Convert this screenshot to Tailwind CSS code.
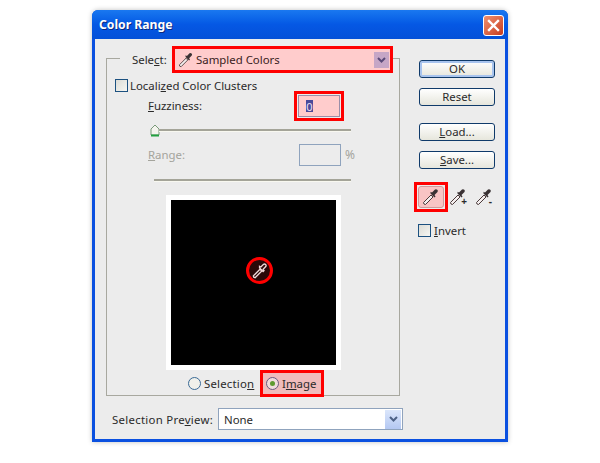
<!DOCTYPE html>
<html lang="en">
<head>
    <meta charset="UTF-8">
    <title>Color Range</title>
    <script src="https://cdn.jsdelivr.net/npm/@tailwindcss/browser@4"></script>
</head>
<body class="bg-white w-[600px] h-[463px] overflow-hidden font-['Noto_Sans',sans-serif] text-[11.4px] leading-none text-[#2a2a2a]">
    <svg class="hidden">
        <symbol id="dropper" viewBox="0 0 18 18">
            <path d="M2 16l-.5-1.500L9 7l2 2-7.500 7.500z" fill="#f4eeee" stroke="#4a3a3a" stroke-width="1"/>
            <path d="M8.500 5.500l4 4 1-1-1-1.500 3-3a1.800 1.800 0 0 0-2.500-2.500l-3 3-1.500-.8z" fill="#3a3234"/>
        </symbol>
    </svg>

    <!-- window -->
    <div class="ml-[92px] mt-[10px] w-[416px] h-[432px] flex flex-col rounded-t-[6px] bg-[#0a50e0] shadow-[0_0_5px_rgba(0,0,0,0.25)]">
        <!-- title bar -->
        <div class="h-[29px] shrink-0 flex items-center justify-between pl-[7px] pr-[4px] rounded-t-[6px] bg-gradient-to-b from-[#1a78f0] via-[#0558e4] to-[#0450d8]">
            <span class="text-white font-bold text-[12.200px] mt-[2px] [text-shadow:1px_1px_0_#0a2a80]">Color Range</span>
            <div class="w-[21px] h-[21px] mt-[1px] rounded-[3px] border border-white bg-gradient-to-br from-[#ee9070] to-[#c8391a] flex items-center justify-center">
                <svg width="13" height="13" viewBox="0 0 13 13"><path d="M2 2l9 9M11 2l-9 9" stroke="#fff" stroke-width="2.400" stroke-linecap="square"/></svg>
            </div>
        </div>

        <!-- client area -->
        <div class="flex-1 ml-[3px] mr-[3px] mb-[3px] bg-[#ececec] flex">
            <!-- left column -->
            <div class="w-[324px] pl-[11px] pt-[19px] flex flex-col">
                <div class="w-[294px] h-[338px] border border-[#a8a89f] flex flex-col">
                    <!-- select row -->
                    <div class="-mt-[13px] ml-[13px] mr-[6px] pl-[12px] bg-[#ececec] flex items-center">
                        <span class="w-[40px] pt-[1px]">Sele<u>c</u>t:</span>
                        <div class="w-[221px] h-[27px] border-[3px] border-[#ff0000] bg-[#ffcccc] flex items-center pl-[3px] pr-[1px]">
                            <svg width="16" height="16"><use href="#dropper"/></svg>
                            <span class="ml-[2px] pt-[1px] flex-1 text-[#3a2222]">Sampled Colors</span>
                            <div class="w-[15px] h-[16px] bg-[#c6a6c6] flex items-center justify-center">
                                <svg width="9" height="6" viewBox="0 0 9 6"><path d="M1 1l3.500 3.500L8 1" fill="none" stroke="#5a4a78" stroke-width="2"/></svg>
                            </div>
                        </div>
                    </div>
                    <!-- localized -->
                    <div class="mt-[6px] ml-[8px] flex items-center">
                        <div class="w-[13px] h-[13px] border border-[#1c5180] bg-gradient-to-br from-[#dcdcd6] to-[#f6f6f2]"></div>
                        <span class="ml-[2px]">Locali<u>z</u>ed Color Clusters</span>
                    </div>
                    <!-- fuzziness -->
                    <div class="-mt-[1px] ml-[41px] flex items-center">
                        <span class="w-[146px]"><u>F</u>uzziness:</span>
                        <div class="w-[50px] h-[30px] border-[3px] border-[#ff0000] p-[1px]">
                            <div class="w-full h-full border border-[#9a8ea8] bg-[#ffcccc] flex items-center pl-[7px]">
                                <span class="w-[7px] h-[12px] bg-[#4a4a9a] text-[#f0e0f0] text-[11px] flex items-center justify-center">0</span>
                            </div>
                        </div>
                    </div>
                    <!-- slider -->
                    <div class="mt-[3px] ml-[43px] flex items-center h-[13px]">
                        <svg width="10" height="13" viewBox="0 0 10 13" class="shrink-0"><path d="M1 5l4-4 4 4v6H1z" fill="#f4f4ee" stroke="#7a9a7a"/><path d="M1 11.500h8" stroke="#22a040" stroke-width="2"/></svg>
                        <div class="w-[192px] h-[3px] -ml-[1px] bg-[#a4a498] border-b border-[#f8f8f0]"></div>
                    </div>
                    <!-- range -->
                    <div class="mt-[7px] ml-[41px] flex items-center text-[#a4a49c]">
                        <span class="w-[151px]"><u>R</u>ange:</span>
                        <div class="w-[42px] h-[22px] border border-[#8fa3bd]"></div>
                        <span class="ml-[4px] text-[12px]">%</span>
                    </div>
                    <div class="mt-[13px] ml-[47px] w-[197px] h-[3px] shrink-0 bg-[#a4a498] border-b border-[#f8f8f0]"></div>
                    <!-- preview -->
                    <div class="mt-[13px] ml-[59px] w-[175px] h-[175px] shrink-0 border-[5px] border-white bg-black relative">
                        <div class="absolute left-[75px] top-[57px] w-[27px] h-[27px] rounded-full border-[3px] border-[#ff0000] bg-[#2a0808] flex items-center justify-center">
                            <svg width="16" height="16" viewBox="0 0 18 18" fill="none" stroke="#f0d8d8" stroke-width="1.500"><path d="M2 16l-.5-1.500L9 7l2 2-7.500 7.500z"/><path d="M8.500 5.500l4 4 1-1-1-1.500 3-3a1.800 1.800 0 0 0-2.500-2.500l-3 3-1.500-.8z"/></svg>
                        </div>
                    </div>
                    <!-- radios -->
                    <div class="ml-[81px] flex items-center shrink-0">
                        <div class="w-[13px] h-[13px] rounded-full border border-[#3a6a96] bg-[#f0f0ea]"></div>
                        <span class="ml-[3px] w-[51px] pt-[1px] tracking-[0.2px]">Selectio<u>n</u></span>
                        <div class="ml-[5px] w-[64px] h-[27px] border-[3px] border-[#ff0000] bg-[#f0bcbc] flex items-center pl-[3px]">
                            <div class="w-[13px] h-[13px] rounded-full border border-[#6a5a80] bg-[#f0dcdc] flex items-center justify-center">
                                <div class="w-[5px] h-[5px] rounded-full bg-[#5f9a30]"></div>
                            </div>
                            <span class="ml-[3px] pt-[1px]">I<u>m</u>age</span>
                        </div>
                    </div>
                </div>
                <!-- selection preview -->
                <div class="mt-[12px] ml-[6px] flex items-center">
                    <span class="w-[106px] pt-[1px] tracking-[0.28px]">Selection Pre<u>v</u>iew:</span>
                    <div class="w-[185px] h-[22px] border border-[#8fa3bd] bg-white flex items-center pl-[5px] pr-[1px]">
                        <span class="flex-1 pt-[1px]">None</span>
                        <div class="w-[16px] h-[19px] bg-gradient-to-b from-[#dbe6fb] to-[#b4c8f2] flex items-center justify-center">
                            <svg width="9" height="6" viewBox="0 0 9 6"><path d="M1 1l3.500 3.500L8 1" fill="none" stroke="#4d6185" stroke-width="2"/></svg>
                        </div>
                    </div>
                </div>
            </div>

            <!-- right column -->
            <div class="flex-1 pt-[21px] flex flex-col">
                <button class="w-[76px] h-[18px] rounded-[3px] border border-[#0f3a6a] bg-gradient-to-b from-white to-[#e6e6dc] shadow-[inset_0_0_0_2px_#a8c4ee] flex items-center justify-center">OK</button>
                <button class="mt-[10px] w-[76px] h-[18px] rounded-[3px] border border-[#0f3a6a] bg-gradient-to-b from-white to-[#e6e6dc] flex items-center justify-center">Reset</button>
                <button class="mt-[17px] w-[76px] h-[18px] rounded-[3px] border border-[#0f3a6a] bg-gradient-to-b from-white to-[#e6e6dc] flex items-center justify-center"><span><u>L</u>oad...</span></button>
                <button class="mt-[10px] w-[76px] h-[18px] rounded-[3px] border border-[#0f3a6a] bg-gradient-to-b from-white to-[#e6e6dc] flex items-center justify-center"><span><u>S</u>ave...</span></button>
                <!-- eyedroppers -->
                <div class="mt-[13px] -ml-[5px] flex items-center">
                    <div class="w-[34px] h-[30px] border-[3px] border-[#ff0000] p-[1px]">
                        <div class="w-full h-full rounded-[3px] border border-[#d09a9a] bg-[#f8c4c4] flex items-center justify-center">
                            <svg width="18" height="18"><use href="#dropper"/></svg>
                        </div>
                    </div>
                    <div class="relative ml-[1px] w-[18px] h-[18px]">
                        <svg width="18" height="18"><use href="#dropper"/></svg>
                        <span class="absolute right-[0px] bottom-[0px] text-[10px] font-bold">+</span>
                    </div>
                    <div class="relative ml-[8px] w-[18px] h-[18px]">
                        <svg width="18" height="18"><use href="#dropper"/></svg>
                        <span class="absolute right-[1px] bottom-[0px] text-[10px] font-bold">-</span>
                    </div>
                </div>
                <!-- invert -->
                <div class="mt-[12px] -ml-[1px] flex items-center">
                    <div class="w-[13px] h-[13px] border border-[#1c5180] bg-gradient-to-br from-[#dcdcd6] to-[#f6f6f2]"></div>
                    <span class="ml-[3px]"><u>I</u>nvert</span>
                </div>
            </div>
        </div>
    </div>
</body>
</html>
